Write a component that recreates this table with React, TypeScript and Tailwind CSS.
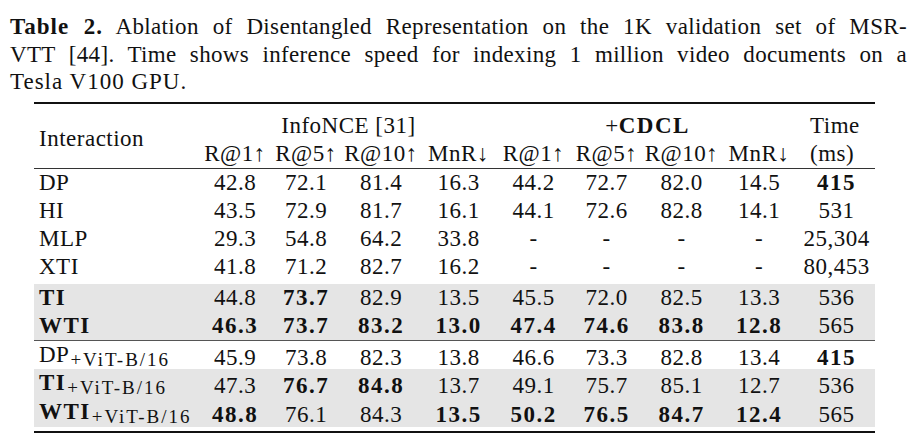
import React from 'react'

const grid =
  'grid grid-cols-[166px_70px_72px_78px_77px_73px_73px_77px_78px_77px] tracking-[0.5px]'

type Cell = { v: string; b?: boolean }

type RowData = {
  label: string
  sub?: string
  boldLabel?: boolean
  cells: Cell[]
  gray?: boolean
  h: string
}

const c = (v: string, b = false): Cell => ({ v, b })

const group1: RowData[] = [
  {
    label: 'DP',
    h: 'h-[28px]',
    cells: [c('42.8'), c('72.1'), c('81.4'), c('16.3'), c('44.2'), c('72.7'), c('82.0'), c('14.5'), c('415', true)],
  },
  {
    label: 'HI',
    h: 'h-[28px]',
    cells: [c('43.5'), c('72.9'), c('81.7'), c('16.1'), c('44.1'), c('72.6'), c('82.8'), c('14.1'), c('531')],
  },
  {
    label: 'MLP',
    h: 'h-[28px]',
    cells: [c('29.3'), c('54.8'), c('64.2'), c('33.8'), c('-'), c('-'), c('-'), c('-'), c('25,304')],
  },
  {
    label: 'XTI',
    h: 'h-[28px] mb-[3px]',
    cells: [c('41.8'), c('71.2'), c('82.7'), c('16.2'), c('-'), c('-'), c('-'), c('-'), c('80,453')],
  },
  {
    label: 'TI',
    boldLabel: true,
    gray: true,
    h: 'h-[28px]',
    cells: [c('44.8'), c('73.7', true), c('82.9'), c('13.5'), c('45.5'), c('72.0'), c('82.5'), c('13.3'), c('536')],
  },
  {
    label: 'WTI',
    boldLabel: true,
    gray: true,
    h: 'h-[28px]',
    cells: [
      c('46.3', true), c('73.7', true), c('83.2', true), c('13.0', true),
      c('47.4', true), c('74.6', true), c('83.8', true), c('12.8', true), c('565'),
    ],
  },
]

const group2: RowData[] = [
  {
    label: 'DP',
    sub: '+ViT-B/16',
    h: 'h-[28px]',
    cells: [c('45.9'), c('73.8'), c('82.3'), c('13.8'), c('46.6'), c('73.3'), c('82.8'), c('13.4'), c('415', true)],
  },
  {
    label: 'TI',
    sub: '+ViT-B/16',
    boldLabel: true,
    gray: true,
    h: 'h-[29px]',
    cells: [c('47.3'), c('76.7', true), c('84.8', true), c('13.7'), c('49.1'), c('75.7'), c('85.1'), c('12.7'), c('536')],
  },
  {
    label: 'WTI',
    sub: '+ViT-B/16',
    boldLabel: true,
    gray: true,
    h: 'h-[29px]',
    cells: [
      c('48.8', true), c('76.1'), c('84.3'), c('13.5', true),
      c('50.2', true), c('76.5', true), c('84.7', true), c('12.4', true), c('565'),
    ],
  },
]

function Row({ r }: { r: RowData }) {
  return (
    <div className={`${grid} ${r.h} items-center ${r.gray ? 'bg-[#e5e5e5]' : ''}`}>
      <div className={`pl-[5px] whitespace-nowrap ${r.boldLabel ? 'font-bold tracking-[1.5px]' : ''}`}>
        {r.label}
        {r.sub && (
          <span className="text-[19px] font-normal tracking-[2px] align-[-4px] ml-[1px]">{r.sub}</span>
        )}
      </div>
      {r.cells.map((cell, i) => (
        <div key={i} className={`text-center ${cell.b ? 'font-bold tracking-[1.5px]' : ''}`}>
          {cell.v}
        </div>
      ))}
    </div>
  )
}

const metrics = ['R@1↑', 'R@5↑', 'R@10↑', 'MnR↓']

export default function App() {
  return (
    <div className="w-[920px] h-[442px] bg-white text-[#111] font-['Liberation_Serif',serif] overflow-hidden">
      {/* caption */}
      <div className="ml-[10px] w-[897px] pt-[13px] text-[23px] leading-[27.5px] tracking-[0.35px]">
        <div className="text-justify [text-align-last:justify] whitespace-nowrap">
          <span className="font-bold tracking-[1px]">Table 2.</span> Ablation of Disentangled Representation on the 1K validation set of MSR-
        </div>
        <div className="text-justify [text-align-last:justify]">
          VTT [44]. Time shows inference speed for indexing 1 million video documents on a
        </div>
        <div className="tracking-[1px]">Tesla V100 GPU.</div>
      </div>

      {/* table */}
      <div className="ml-[34px] w-[841px] mt-[6px] text-[23px] leading-[28px]">
        <div className="h-[2px] bg-[#111]" />

        <div className={`${grid} grid-rows-[36px_28px]`}>
          <div className="row-span-2 pl-[5px] pt-[21px]">Interaction</div>
          <div className="col-span-4 text-center pt-[8px]">InfoNCE [31]</div>
          <div className="col-span-4 text-center pt-[8px]">
            +<span className="font-bold tracking-[1.5px]">CDCL</span>
          </div>
          <div className="pl-[12px] pt-[8px]">Time</div>
          {metrics.map((m) => (
            <div key={'a' + m} className="text-center whitespace-nowrap">{m}</div>
          ))}
          {metrics.map((m) => (
            <div key={'b' + m} className="text-center whitespace-nowrap">{m}</div>
          ))}
          <div className="pl-[12px]">(ms)</div>
        </div>

        <div className="h-[1px] bg-[#333]" />

        {group1.map((r) => (
          <Row key={r.label} r={r} />
        ))}

        <div className="h-[1.5px] bg-[#555]" />

        {group2.map((r) => (
          <Row key={r.label + r.sub} r={r} />
        ))}

        <div className="h-[4px]" />
        <div className="h-[2px] bg-[#111]" />
      </div>
    </div>
  )
}
